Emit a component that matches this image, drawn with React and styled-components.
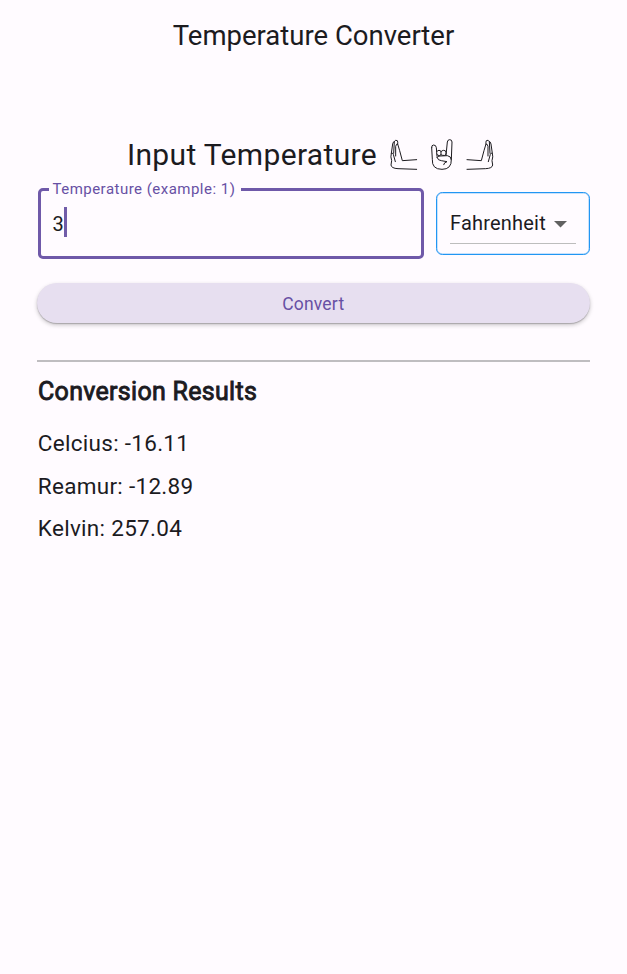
import React from "react";
import styled, { createGlobalStyle } from "styled-components";

const Global = createGlobalStyle`
  *, *::before, *::after { box-sizing: border-box; }
  body {
    margin: 0;
    background: #fffbff;
    color: #1c1b1f;
    font-family: Roboto, sans-serif;
  }
`;

const Page = styled.div`
  min-height: 974px;
  display: flex;
  flex-direction: column;
  background: #fffbff;
`;

const AppBar = styled.header`
  height: 70px;
  display: flex;
  align-items: center;
  justify-content: center;
`;

const AppTitle = styled.h1`
  margin: 0;
  font-size: 27.5px;
  line-height: 35px;
  font-weight: 400;
`;

const Content = styled.main`
  display: flex;
  flex-direction: column;
  padding: 67px 37.5px 0;
`;

const Heading = styled.h2`
  margin: 0;
  height: 35px;
  display: flex;
  justify-content: center;
  align-items: center;
  font-size: 30px;
  line-height: 35px;
  font-weight: 400;
  letter-spacing: 0.35px;
  white-space: nowrap;
`;

const Hands = styled.svg`
  width: 108px;
  height: 38px;
  margin-top: 1px;
  margin-left: 11px;
  margin-right: 4px;
  fill: none;
  stroke: #1c1b1f;
  stroke-width: 3;
  stroke-linecap: round;
  stroke-linejoin: round;
`;

const InputRow = styled.div`
  display: flex;
  align-items: flex-start;
  gap: 12px;
  margin-top: 8px;
`;

const Field = styled.fieldset`
  flex: 1;
  min-width: 0;
  height: 79px;
  margin: 0;
  padding: 0 12px;
  border: 3px solid #6f59a9;
  border-radius: 5px;
`;

const FieldLabel = styled.legend`
  height: 19px;
  margin-left: -4px;
  padding: 0 6px 0 4px;
  color: #6750a4;
  font-size: 15px;
  line-height: 19px;
  letter-spacing: 0.48px;
`;

const FieldValue = styled.div`
  display: flex;
  align-items: center;
  height: 46px;
  font-size: 20px;
  line-height: 32px;
  letter-spacing: 0.4px;
`;

const Digits = styled.span`
  padding-top: 4px;
`;

const Caret = styled.span`
  width: 3px;
  height: 30px;
  background: #715ca9;
`;

const UnitBox = styled.div`
  width: 154px;
  height: 63px;
  margin-top: 12px;
  padding: 12px 13px 10px;
  border: 1px solid #2196f3;
  box-shadow: inset 0 0 0 0.5px rgba(33, 150, 243, 0.5);
  border-radius: 6.25px;
`;

const UnitSelect = styled.div`
  height: 39px;
  display: flex;
  align-items: center;
  justify-content: space-between;
  padding: 0 8.5px 2px 0.5px;
  border-bottom: 1px solid #bdbdbd;
  font-size: 20px;
  letter-spacing: 0.2px;
`;

const Arrow = styled.svg`
  width: 13px;
  height: 7px;
  margin-top: 3px;
  fill: #616161;
`;

const ConvertButton = styled.button`
  height: 40px;
  margin: 24px 0 0 -0.5px;
  padding: 2px 0 0;
  border: 0;
  border-radius: 20px;
  background: #e7dff0;
  color: #6750a4;
  font: 400 17.5px/25px Roboto, sans-serif;
  letter-spacing: 0.2px;
  box-shadow: 0 1px 1px rgba(0, 0, 0, 0.2), 0 2px 4px rgba(0, 0, 0, 0.22);
`;

const Divider = styled.hr`
  align-self: stretch;
  height: 2px;
  margin: 37px 0 0 -0.5px;
  border: 0;
  background: #bfbdc0;
`;

const ResultsTitle = styled.h3`
  margin: 14px 0 15px 0.5px;
  font-size: 25px;
  line-height: 31px;
  font-weight: 400;
  letter-spacing: 0.3px;
  -webkit-text-stroke: 0.9px currentColor;
`;

const Result = styled.p`
  margin: 0 0 0 0.3px;
  height: 42.5px;
  font-size: 22.5px;
  line-height: 42.5px;
  letter-spacing: 0.29px;
`;

const results = [
  ["Celcius", "-16.11"],
  ["Reamur", "-12.89"],
  ["Kelvin", "257.04"],
];

const PALM =
  "M110 118 L54 116 Q34 115 33 105 L35 92 Q31 80 34 70 Q37 67 40 73 L46 95 M34 70 L38 42 Q40 34 43 35 Q46 28 52 32 Q54 36 53 42 L59 62 L67 92 L110 89 M43 35 L41 70 M53 42 Q49 40 47 49 L47 78";

function HandGestures() {
  return (
    <Hands viewBox="24 18 324 114">
      <path d={PALM} />
      <path d="M155 53 Q154 45 161 45 Q168 45 169 53 L171 79 M155 53 L157 88 Q155 118 186 118 Q215 118 214 88 L216 36 Q216 29 209 29 Q203 29 202 36 L198 76 M170 65 Q172 61 177 61 Q183 61 183 66 V74 Q180 78 174 76 L170 72 M183 65 Q186 61 191 61 Q198 61 198 67 V73 Q195 78 188 76 L183 74 M171 82 Q172 78 180 78 L202 77 Q213 78 214 89 M171 82 Q174 92 184 92 L201 95 Q192 97 191 104" />
      <path d={PALM} transform="translate(371 0) scale(-1 1)" />
    </Hands>
  );
}

export default function App() {
  return (
    <>
      <Global />
      <Page>
        <AppBar>
          <AppTitle>Temperature Converter</AppTitle>
        </AppBar>
        <Content>
          <Heading>
            Input Temperature
            <HandGestures />
          </Heading>
          <InputRow>
            <Field>
              <FieldLabel>Temperature (example: 1)</FieldLabel>
              <FieldValue>
                <Digits>3</Digits>
                <Caret />
              </FieldValue>
            </Field>
            <UnitBox>
              <UnitSelect>
                Fahrenheit
                <Arrow viewBox="0 0 13 7">
                  <path d="M0 0h13L6.5 6.5z" />
                </Arrow>
              </UnitSelect>
            </UnitBox>
          </InputRow>
          <ConvertButton>Convert</ConvertButton>
          <Divider />
          <ResultsTitle>Conversion Results</ResultsTitle>
          {results.map(([unit, value]) => (
            <Result key={unit}>
              {unit}: {value}
            </Result>
          ))}
        </Content>
      </Page>
    </>
  );
}
